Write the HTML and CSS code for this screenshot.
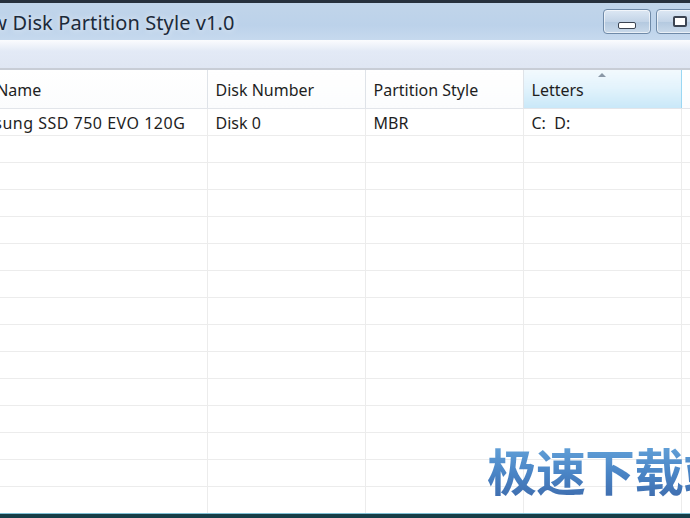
FILE: index.html
```html
<!DOCTYPE html>
<html lang="en">
<head>
    <meta charset="UTF-8">
    <title>Show Disk Partition Style v1.0</title>
    <link rel="stylesheet" href="styles.css">
</head>
<body>
    <div class="window">
        <div class="titlebar">
            <span class="title">Show Disk Partition Style v1.0</span>
            <div class="caption-buttons">
                <button type="button" class="cap-btn"><span class="ico-min"></span></button>
                <button type="button" class="cap-btn"><span class="ico-max"></span></button>
            </div>
        </div>
        <div class="toolband"></div>

        <table class="list">
            <thead>
                <tr>
                    <th class="c1">Disk Name</th>
                    <th class="c2">Disk Number</th>
                    <th class="c3">Partition Style</th>
                    <th class="c4 sorted">Letters<span class="sort-arrow"></span></th>
                    <th class="c5"></th>
                </tr>
            </thead>
            <tbody>
                <tr><td class="wide">Samsung SSD 750 EVO 120G</td><td>Disk 0</td><td>MBR</td><td>C:&nbsp; D:</td><td></td></tr>
                <tr><td></td><td></td><td></td><td></td><td></td></tr>
                <tr><td></td><td></td><td></td><td></td><td></td></tr>
                <tr><td></td><td></td><td></td><td></td><td></td></tr>
                <tr><td></td><td></td><td></td><td></td><td></td></tr>
                <tr><td></td><td></td><td></td><td></td><td></td></tr>
                <tr><td></td><td></td><td></td><td></td><td></td></tr>
                <tr><td></td><td></td><td></td><td></td><td></td></tr>
                <tr><td></td><td></td><td></td><td></td><td></td></tr>
                <tr><td></td><td></td><td></td><td></td><td></td></tr>
                <tr><td></td><td></td><td></td><td></td><td></td></tr>
                <tr><td></td><td></td><td></td><td></td><td></td></tr>
                <tr><td></td><td></td><td></td><td></td><td></td></tr>
                <tr><td></td><td></td><td></td><td></td><td></td></tr>
                <tr><td></td><td></td><td></td><td></td><td></td></tr>
            </tbody>
        </table>

        <div class="watermark">极速下载站</div>
        <div class="bottom-edge"></div>
    </div>
</body>
</html>
```

FILE: styles.css
```css
html, body {
    margin: 0;
    padding: 0;
    width: 690px;
    height: 518px;
    overflow: hidden;
    background-color: #fff;
}

.window {
    position: relative;
    width: 734px;
    height: 518px;
    margin-left: -44px;
    display: flex;
    flex-direction: column;
    font-family: "Noto Sans", "Open Sans", sans-serif;
    color: #1e1e1e;
}

.titlebar {
    height: 37px;
    border-top: 3px solid #27313d;
    background: linear-gradient(#c1d5ea, #bcd2ea 60%, #c6d9ee);
    display: flex;
    align-items: center;
    justify-content: space-between;
}

.title {
    font-size: 20px;
    color: #1c2a3a;
    padding-left: 0;
    margin-top: 2px;
    letter-spacing: 0.1px;
    text-shadow: 0 0 6px rgba(255, 255, 255, 0.8);
}

.caption-buttons {
    display: flex;
    gap: 5px;
    margin-right: -14px;
    align-self: flex-start;
    margin-top: 6px;
}

.cap-btn {
    width: 48px;
    height: 25px;
    border: 1px solid #6f8aa8;
    border-radius: 4px;
    background: linear-gradient(#dde8f4, #c3d4e7 50%, #b3c8df 51%, #c9d9ea);
    box-shadow: inset 0 0 0 1px rgba(255, 255, 255, 0.6);
    display: flex;
    align-items: center;
    justify-content: center;
    padding: 0;
}

.ico-min {
    width: 16px;
    height: 5px;
    margin-top: 7px;
    border: 1px solid #3b4452;
    border-radius: 2px;
    background: #fff;
}

.ico-max {
    width: 10px;
    height: 7px;
    border: 2px solid #3b4452;
    border-radius: 2px;
    background: #fff;
}

.toolband {
    height: 28px;
    background: linear-gradient(#fbfcfe, #f2f5fb 15%, #e3eaf6 40%, #dfe6f3);
    border-bottom: 2px solid #c8cdd6;
}

.list {
    border-collapse: collapse;
    table-layout: fixed;
    width: 734px;
    font-size: 16px;
}

.list th {
    height: 38px;
    padding: 2px 0 0 8px;
    text-align: left;
    font-weight: normal;
    background: linear-gradient(#ffffff, #fbfcfd);
    border-right: 1px solid #dfe3e8;
    border-bottom: 1px solid #e2e5ea;
    box-sizing: border-box;
    position: relative;
}

.list th.c1 { width: 251px; padding-left: 4px; }
.list .c2 { width: 158px; }
.list .c3 { width: 158px; }
.list .c4 { width: 158px; }
.list .c5 { border-right: none; }

.list th.sorted {
    background: linear-gradient(#f2f9fd, #e3f3fc 45%, #c9e8f8);
    border-left: 1px solid #9ad7f3;
    border-right: 1px solid #9ad7f3;
}

.sort-arrow {
    position: absolute;
    left: 74px;
    top: 3px;
    width: 0;
    height: 0;
    border-left: 4px solid transparent;
    border-right: 4px solid transparent;
    border-bottom: 4px solid #8a97a6;
}

.list td {
    height: 27px;
    padding: 3px 0 0 8px;
    box-sizing: border-box;
    border-right: 1px solid #ececec;
    border-bottom: 1px solid #ececec;
    white-space: nowrap;
    overflow: hidden;
}

.list td.wide {
    padding-left: 4px;
    letter-spacing: 0.5px;
}

.list td:last-child {
    border-right: none;
}

.watermark {
    position: absolute;
    left: 531px;
    top: 433px;
    font-family: "Noto Sans CJK SC", sans-serif;
    font-weight: bold;
    font-size: 50px;
    letter-spacing: -1px;
    white-space: nowrap;
    background: linear-gradient(#6eaee0, #4a85c6 55%, #3c67a8);
    -webkit-background-clip: text;
    background-clip: text;
    color: transparent;
}

.bottom-edge {
    position: absolute;
    left: 0;
    right: 0;
    bottom: 0;
    height: 4px;
    border-top: 1px solid #7fc0d4;
    background: #163d47;
}
```
